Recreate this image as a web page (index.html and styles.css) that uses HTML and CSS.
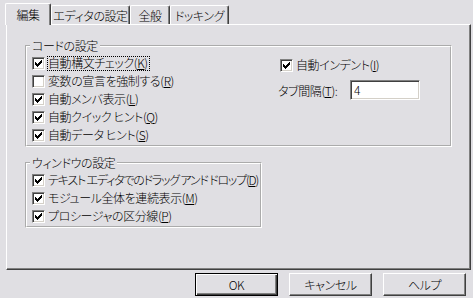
FILE: index.html
```html
<!DOCTYPE html>
<html>
<head>
  <meta charset="UTF-8">
  <title>オプション</title>
  <link rel="stylesheet" href="styles.css">
</head>
<body>
  <div class="dialog">
    <div class="tabs">
      <div class="tab selected">編集</div>
      <div class="tab tab-editor">エディタの設定</div>
      <div class="tab tab-general">全般</div>
      <div class="tab tab-docking">ドッキング</div>
    </div>

    <div class="panel">
      <div class="group group-code">
        <span class="legend">コードの設定</span>
        <div class="cols">
          <div class="col-left">
            <label class="row">
              <span class="box"><svg class="check" viewBox="0 0 7 7" width="7" height="7"><path d="M0 2h1v3H0zM1 3h1v3H1zM2 4h1v3H2zM3 3h1v3H3zM4 2h1v3H4zM5 1h1v3H5zM6 0h1v3H6z"/></svg></span>
              <span class="text focus">自動構文チェック(<u>K</u>)</span>
            </label>
            <label class="row">
              <span class="box"></span>
              <span class="text">変数の宣言を強制する(<u>R</u>)</span>
            </label>
            <label class="row">
              <span class="box"><svg class="check" viewBox="0 0 7 7" width="7" height="7"><path d="M0 2h1v3H0zM1 3h1v3H1zM2 4h1v3H2zM3 3h1v3H3zM4 2h1v3H4zM5 1h1v3H5zM6 0h1v3H6z"/></svg></span>
              <span class="text">自動メンバ表示(<u>L</u>)</span>
            </label>
            <label class="row">
              <span class="box"><svg class="check" viewBox="0 0 7 7" width="7" height="7"><path d="M0 2h1v3H0zM1 3h1v3H1zM2 4h1v3H2zM3 3h1v3H3zM4 2h1v3H4zM5 1h1v3H5zM6 0h1v3H6z"/></svg></span>
              <span class="text">自動クイック ヒント(<u>Q</u>)</span>
            </label>
            <label class="row">
              <span class="box"><svg class="check" viewBox="0 0 7 7" width="7" height="7"><path d="M0 2h1v3H0zM1 3h1v3H1zM2 4h1v3H2zM3 3h1v3H3zM4 2h1v3H4zM5 1h1v3H5zM6 0h1v3H6z"/></svg></span>
              <span class="text">自動データ ヒント(<u>S</u>)</span>
            </label>
          </div>
          <div class="col-right">
            <label class="row">
              <span class="box"><svg class="check" viewBox="0 0 7 7" width="7" height="7"><path d="M0 2h1v3H0zM1 3h1v3H1zM2 4h1v3H2zM3 3h1v3H3zM4 2h1v3H4zM5 1h1v3H5zM6 0h1v3H6z"/></svg></span>
              <span class="text">自動インデント(<u>I</u>)</span>
            </label>
            <div class="tabsize">
              <span class="tabsize-label">タブ間隔(<u>T</u>):</span>
              <span class="field">4</span>
            </div>
          </div>
        </div>
      </div>

      <div class="group group-window">
        <span class="legend">ウィンドウの設定</span>
        <label class="row">
          <span class="box"><svg class="check" viewBox="0 0 7 7" width="7" height="7"><path d="M0 2h1v3H0zM1 3h1v3H1zM2 4h1v3H2zM3 3h1v3H3zM4 2h1v3H4zM5 1h1v3H5zM6 0h1v3H6z"/></svg></span>
          <span class="text tight">テキスト エディタでのドラッグ アンド ドロップ(<u>D</u>)</span>
        </label>
        <label class="row">
          <span class="box"><svg class="check" viewBox="0 0 7 7" width="7" height="7"><path d="M0 2h1v3H0zM1 3h1v3H1zM2 4h1v3H2zM3 3h1v3H3zM4 2h1v3H4zM5 1h1v3H5zM6 0h1v3H6z"/></svg></span>
          <span class="text">モジュール全体を連続表示(<u>M</u>)</span>
        </label>
        <label class="row">
          <span class="box"><svg class="check" viewBox="0 0 7 7" width="7" height="7"><path d="M0 2h1v3H0zM1 3h1v3H1zM2 4h1v3H2zM3 3h1v3H3zM4 2h1v3H4zM5 1h1v3H5zM6 0h1v3H6z"/></svg></span>
          <span class="text">プロシージャの区分線(<u>P</u>)</span>
        </label>
      </div>
    </div>

    <div class="buttons">
      <div class="btn default">OK</div>
      <div class="btn">キャンセル</div>
      <div class="btn">ヘルプ</div>
    </div>
  </div>
</body>
</html>
```

FILE: styles.css
```css
body {
  margin: 0;
  width: 473px;
  height: 298px;
  overflow: hidden;
  background-color: #e0dfe3;
  font-family: 'Noto Sans CJK JP', 'Liberation Sans', sans-serif;
  font-size: 12px;
  font-weight: 300;
  font-feature-settings: "palt";
  letter-spacing: -0.4px;
  color: #000;
}
.dialog {
  padding: 3px 2px 0 6px;
}
.tabs {
  display: flex;
  align-items: flex-end;
  height: 21px;
  margin-left: -1px;
}
.tab {
  box-sizing: border-box;
  height: 19px;
  padding-top: 2px;
  line-height: 16px;
  text-align: center;
  border-top: 1px solid #fff;
  border-left: 1px solid #fff;
  border-right: 1px solid #404040;
  border-radius: 2px 2px 0 0;
  box-shadow: inset -1px 0 0 #808080;
  white-space: nowrap;
}
.tab.selected {
  position: relative;
  z-index: 1;
  width: 46px;
  height: 22px;
  margin-bottom: -1px;
  padding-top: 3px;
  background-color: #e0dfe3;
}
.tab-editor {
  width: 79px;
}
.tab-general {
  width: 40px;
}
.tab-docking {
  width: 59px;
}
.panel {
  box-sizing: border-box;
  height: 246px;
  padding: 20px 0 0 18px;
  border-top: 1px solid #fff;
  border-left: 1px solid #fff;
  border-right: 1px solid #404040;
  border-bottom: 1px solid #404040;
  box-shadow: inset -1px -1px 0 #808080;
}
.group {
  position: relative;
  box-sizing: border-box;
  border: 2px groove #fff;
  padding: 7px 0 1px 5px;
}
.group-code {
  width: 427px;
  height: 102px;
}
.group-window {
  width: 237px;
  height: 66px;
  margin-top: 15px;
}
.legend {
  position: absolute;
  top: -9px;
  left: 3px;
  padding: 0 2px;
  line-height: 16px;
  background-color: #e0dfe3;
}
.cols {
  display: flex;
}
.col-left {
  width: 246px;
}
.col-right {
  padding-top: 2px;
}
.col-right .row {
  padding-left: 2px;
}
.row {
  display: flex;
  align-items: center;
  height: 18px;
  white-space: nowrap;
}
.box {
  box-sizing: border-box;
  display: flex;
  align-items: center;
  justify-content: center;
  flex-shrink: 0;
  width: 13px;
  height: 13px;
  margin-right: 2px;
  background-color: #fff;
  border: 1px solid;
  border-color: #808080 #fff #fff #808080;
  box-shadow: inset 1px 1px 0 #404040, inset -1px -1px 0 #d4d0c8;
}
.check {
  display: block;
  fill: #000;
  shape-rendering: crispEdges;
}
.text {
  border: 1px dotted transparent;
  line-height: 12px;
  padding: 0 1px 1px 0;
}
.text.focus {
  border-color: #000;
}
.text.tight {
  letter-spacing: -1.2px;
}
u {
  text-decoration-thickness: 1px;
  text-underline-offset: 1px;
}
.tabsize {
  display: flex;
  align-items: center;
  height: 20px;
  margin-top: 6px;
}
.tabsize-label {
  width: 72px;
  white-space: nowrap;
}
.field {
  box-sizing: border-box;
  width: 70px;
  height: 20px;
  padding-left: 3px;
  line-height: 18px;
  background-color: #fff;
  border: 1px solid;
  border-color: #808080 #fff #fff #808080;
  box-shadow: inset 1px 1px 0 #404040, inset -1px -1px 0 #d4d0c8;
}
.buttons {
  display: flex;
  justify-content: flex-end;
  gap: 11px;
  margin-top: 3px;
  padding-right: 5px;
}
.btn {
  box-sizing: border-box;
  display: flex;
  align-items: center;
  justify-content: center;
  width: 83px;
  height: 23px;
  border: 1px solid;
  border-color: #fff #404040 #404040 #fff;
  box-shadow: inset -1px -1px 0 #808080;
}
.btn.default {
  border-color: #000;
  box-shadow: inset 1px 1px 0 #fff, inset -1px -1px 0 #404040, inset -2px -2px 0 #808080;
}
```
